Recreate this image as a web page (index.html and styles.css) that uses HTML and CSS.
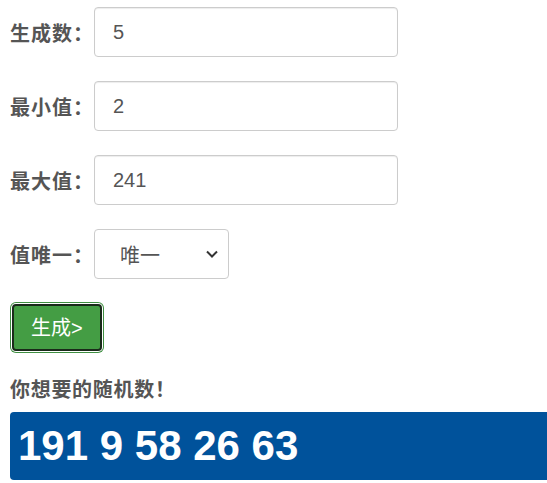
FILE: index.html
```html
<!DOCTYPE html>
<html lang="zh">
<head>
<meta charset="utf-8">
<link rel="stylesheet" href="styles.css">
</head>
<body>
<form class="form">
  <div class="row">
    <label class="label">生成数：</label>
    <input class="field" type="text" value="5">
  </div>
  <div class="row">
    <label class="label">最小值：</label>
    <input class="field" type="text" value="2">
  </div>
  <div class="row">
    <label class="label">最大值：</label>
    <input class="field" type="text" value="241">
  </div>
  <div class="row">
    <label class="label">值唯一：</label>
    <select class="choice">
      <option>唯一</option>
      <option>不唯一</option>
    </select>
  </div>
  <div class="actions">
    <button type="button" class="btn">生成&gt;</button>
  </div>
</form>
<div class="result-title">你想要的随机数！</div>
<div class="result">191 9 58 26 63</div>
</body>
</html>
```
FILE: styles.css
```css
html, body {
  margin: 0;
  overflow: hidden;
  background: #fff;
}
body {
  padding: 7px 0 0 10px;
  font-family: "Liberation Sans", Arial, "Noto Sans CJK SC", sans-serif;
  color: #555;
}
.form {
  margin: 0;
}
.row {
  display: flex;
  align-items: center;
  height: 50px;
  margin-bottom: 24px;
}
.label {
  width: 84px;
  font-size: 20px;
  font-weight: bold;
  color: #555;
  font-family: "Noto Sans CJK SC", sans-serif;
  letter-spacing: 1px;
}
.field {
  box-sizing: border-box;
  width: 304px;
  height: 50px;
  padding: 0 18px;
  border: 1px solid #ccc;
  border-radius: 4px;
  box-shadow: inset 0 1px 1px rgba(0,0,0,.075);
  font-family: "Liberation Sans", Arial, sans-serif;
  font-size: 20px;
  color: #555;
  outline: none;
}
.choice {
  box-sizing: border-box;
  width: 135px;
  height: 50px;
  padding: 0 0 0 25px;
  border: 1px solid #ccc;
  border-radius: 4px;
  background: #fff url("data:image/svg+xml,%3Csvg xmlns='http://www.w3.org/2000/svg' width='12' height='8' viewBox='0 0 12 8'%3E%3Cpath d='M1 1.5l5 5 5-5' fill='none' stroke='%23333' stroke-width='2'/%3E%3C/svg%3E") no-repeat right 10px center;
  -webkit-appearance: none;
  appearance: none;
  font-family: "Noto Sans CJK SC", sans-serif;
  font-size: 20px;
  color: #555;
  outline: none;
}
.actions {
  padding-top: 1px;
}
.btn {
  box-sizing: border-box;
  margin-left: 2px;
  height: 47px;
  padding: 0 17px;
  background: #449d44;
  border: 2px solid #1a2a1a;
  border-radius: 4px;
  box-shadow: 0 0 0 1px #fff, 0 0 0 2px #3f8f42;
  color: #fff;
  font-family: "Liberation Sans", Arial, "Noto Sans CJK SC", sans-serif;
  font-size: 20px;
  line-height: 1;
  cursor: pointer;
}
.result-title {
  margin-top: 24px;
  font-family: "Noto Sans CJK SC", sans-serif;
  font-size: 20px;
  font-weight: bold;
  color: #555;
  line-height: 28px;
  letter-spacing: 0.7px;
}
.result {
  margin-top: 9px;
  width: 600px;
  height: 68px;
  box-sizing: border-box;
  padding-left: 8px;
  background: #00529b;
  border-radius: 4px;
  color: #fff;
  font-family: "Liberation Sans", Arial, sans-serif;
  font-weight: bold;
  font-size: 42px;
  line-height: 68px;
}
```
